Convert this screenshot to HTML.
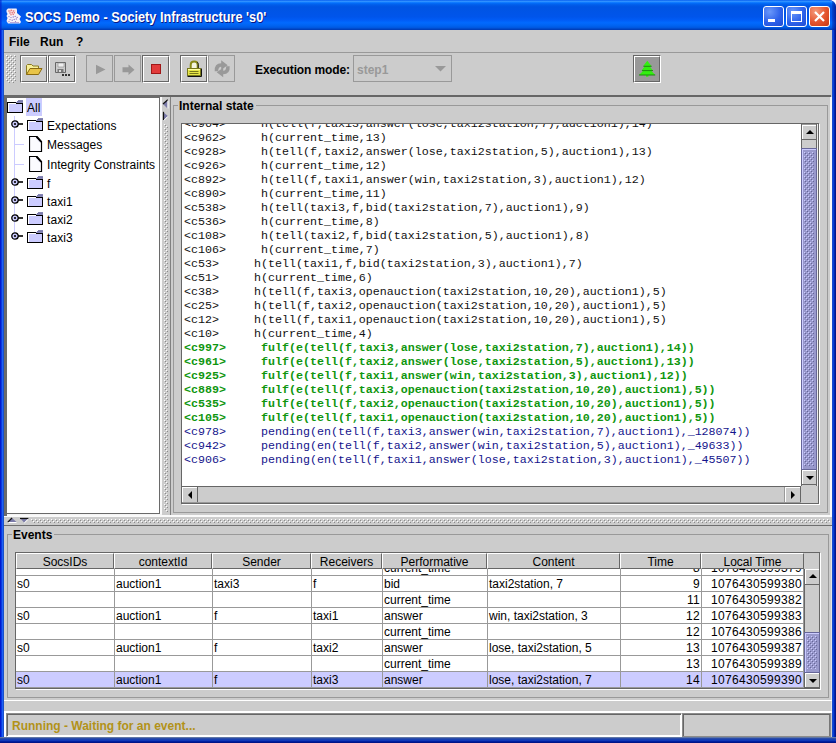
<!DOCTYPE html>
<html>
<head>
<meta charset="utf-8">
<title>SOCS Demo - Society Infrastructure 's0'</title>
<style>
*{box-sizing:border-box;margin:0;padding:0}
html,body{width:836px;height:743px;overflow:hidden;background:#fff}
body{font-family:"Liberation Sans",sans-serif;font-size:12px;color:#000;position:relative}
.abs{position:absolute}
#win{position:absolute;left:0;top:0;width:836px;height:743px;background:#0831d9;border-radius:0 7px 0 0;overflow:hidden}
#titlebar{position:absolute;left:0;top:0;width:836px;height:30px;border-radius:0 7px 0 0;
background:linear-gradient(to bottom,#0058ee 0%,#3593ff 4%,#288eff 6%,#127dff 8%,#036ffc 10%,#0262ee 14%,#0057e5 20%,#0054e3 24%,#0055eb 56%,#005bf5 66%,#026afe 76%,#0062ef 86%,#0058e0 92%,#0048c8 96%,#0038b0 100%)}
#title{position:absolute;left:25px;top:9px;font-weight:bold;font-size:14px;color:#fff;white-space:nowrap;text-shadow:1px 1px 0 #0a1883;transform:scaleX(.908);transform-origin:0 0}
.tb{position:absolute;top:6px;width:21px;height:21px;border:1px solid #fff;border-radius:3px;
background:radial-gradient(circle at 30% 25%,#6a98fa 0%,#2e62ea 55%,#1e4cd4 100%)}
#client{position:absolute;left:4px;top:30px;width:828px;height:707px;background:#ccc}
.mi{position:absolute;top:35px;font-weight:bold;font-size:12px}
.btn{position:absolute;top:55px;width:28px;height:28px;border:1px solid;border-color:#666 #fff #fff #666;background:#ccc}
.btn:after{content:"";position:absolute;left:0;top:0;right:0;bottom:0;border:1px solid;border-color:#fff #666 #666 #fff}
.btn.dis{border:1px solid #999;width:27px;height:27px}
.btn.dis:after{display:none}
.btn svg{position:absolute;left:0;top:0}
.lbl{position:absolute;font-weight:bold;font-size:12px;white-space:nowrap}
.tr{position:absolute;font-size:12px;white-space:nowrap;line-height:14px;letter-spacing:.07px}
pre.ta{position:absolute;left:2px;top:-7px;font-family:"Liberation Mono",monospace;font-size:11.667px;line-height:14px;white-space:pre;color:#111}
pre.ta .g{color:#0f960f;font-weight:bold}
pre.ta .b{color:#14148c}
.hd{position:absolute;top:0;height:16px;background:#ccc;border:1px solid;border-color:#fff #666 #666 #fff;text-align:center;font-size:12px;line-height:16px;white-space:nowrap;overflow:hidden}
.row{position:absolute;left:0;width:788px;height:16px;border-bottom:1px solid #999;background:#fff}
.row.sel{background:#ccccff}
.c{position:absolute;top:0;height:16px;border-right:1px solid #999;font-size:12px;line-height:17px;padding:0 2px 0 1px;white-space:nowrap;overflow:hidden}
.c.r{text-align:right;letter-spacing:.33px;padding-right:1px}
.sbtn{position:absolute;background:#ccc;border:1px solid;border-color:#fff #666 #666 #fff;outline:1px solid #999;outline-offset:0}
.thumb{position:absolute;background-color:#9999cc;border:1px solid #666699;
background-image:conic-gradient(#ccccff 25%,#9999cc 0 50%,#8080b8 0 75%,#9999cc 0);background-size:2px 2px}
.dots{position:absolute;background-image:conic-gradient(#fff 25%,#ccc 0 50%,#999 0 75%,#ccc 0);background-size:2px 2px}

.vs{position:absolute;width:16px;background:#ccc;border-left:1px solid #666;border-right:1px solid #666}
.vs .up{position:absolute;left:0;top:0;width:14px;height:16px;border-top:1px solid #999;border-bottom:1px solid #666;box-shadow:inset 1px 1px 0 #fff}
.vs .dn{position:absolute;left:0;bottom:1px;width:14px;height:15px;border-bottom:1px solid #666;box-shadow:inset 1px 1px 0 #fff}
.vs .th{position:absolute;left:-1px;width:16px;background:#9999cc;border:1px solid #666699;box-shadow:inset 1px 1px 0 #ccccff}
.vs svg{position:absolute}
.pane{position:absolute;border:1px solid #666;box-shadow:1px 1px 0 #fff;background:#ccc}
</style>
</head>
<body>
<div id="win">
<svg width="0" height="0" style="position:absolute"><defs>
<pattern id="bump" width="4" height="4" patternUnits="userSpaceOnUse"><rect x="0" y="0" width="1" height="1" fill="#fff"/><rect x="1" y="1" width="1" height="1" fill="#8a8a8a"/><rect x="2" y="2" width="1" height="1" fill="#fff"/><rect x="3" y="3" width="1" height="1" fill="#8a8a8a"/></pattern>
<pattern id="tbump" width="4" height="4" patternUnits="userSpaceOnUse"><rect x="0" y="0" width="1" height="1" fill="#ccccff"/><rect x="1" y="1" width="1" height="1" fill="#666699"/><rect x="2" y="2" width="1" height="1" fill="#ccccff"/><rect x="3" y="3" width="1" height="1" fill="#666699"/></pattern>
</defs></svg>
<div id="titlebar"></div>
<div class="abs" style="left:832px;top:0;width:4px;height:30px;background:linear-gradient(to right,rgba(0,40,170,.35),rgba(0,20,140,.8))"></div>
<div class="abs" style="left:0;top:0;width:2px;height:30px;background:linear-gradient(to right,rgba(0,25,200,.7),rgba(0,40,210,.3))"></div>
<div id="title">SOCS Demo - Society Infrastructure 's0'</div>
<!-- app icon -->
<svg class="abs" style="left:6px;top:8px" width="16" height="16" viewBox="0 0 16 16">
<path d="M.5 2L2 .5h8.500l.5 1.500V5l4 3.500L13.500 11l1.500 3-1 1.500H2L.5 13l1-3L.5 8l1-2L.5 4z" fill="#f7f0f7"/>
<g fill="#e04a4a" opacity=".85"><circle cx="3" cy="3" r=".8"/><circle cx="5.200" cy="2.300" r=".8"/><circle cx="7.300" cy="3" r=".8"/><circle cx="4" cy="5" r=".8"/><circle cx="6.200" cy="4.800" r=".8"/><circle cx="8.300" cy="4.800" r=".7"/><circle cx="5" cy="6.800" r=".7"/><circle cx="7.300" cy="6.600" r=".7"/></g>
<g fill="#f0a0a8" opacity=".7"><circle cx="4.500" cy="3.800" r="1"/><circle cx="6.800" cy="5.800" r="1"/><circle cx="8.800" cy="3" r=".8"/></g>
<g fill="#6a55b5" opacity=".75"><circle cx="3" cy="8.600" r=".7"/><circle cx="5" cy="9.600" r=".7"/><circle cx="7.200" cy="9" r=".7"/><circle cx="9.200" cy="8.400" r=".7"/><circle cx="11.200" cy="9.400" r=".7"/><circle cx="4" cy="11.600" r=".7"/><circle cx="6.200" cy="12.200" r=".7"/><circle cx="8.200" cy="11.400" r=".7"/><circle cx="10.300" cy="11" r=".7"/><circle cx="3" cy="13.600" r=".6"/><circle cx="9.500" cy="13.500" r=".6"/></g>
<path d="M4 14.500h9" stroke="#b8a8d8" stroke-width="1"/>
</svg>
<!-- window buttons -->
<div class="tb" style="left:763px"><div class="abs" style="left:4px;top:12px;width:7px;height:3px;background:#fff"></div></div>
<div class="tb" style="left:786px"><div class="abs" style="left:4px;top:4px;width:11px;height:11px;border:1px solid #fff;border-top-width:3px"></div></div>
<div class="tb" style="left:809px;background:radial-gradient(circle at 30% 25%,#f49a7c 0%,#e4542e 55%,#c63812 100%)">
<svg class="abs" style="left:0;top:0" width="19" height="19" viewBox="0 0 19 19"><path d="M5 5l9 9M14 5l-9 9" stroke="#fff" stroke-width="2.2"/></svg></div>
<div id="client"></div>
<!-- menu bar -->
<div class="mi" style="left:9px">File</div>
<div class="mi" style="left:40px">Run</div>
<div class="mi" style="left:76px">?</div>
<div class="abs" style="left:4px;top:52px;width:828px;height:1px;background:#999"></div>
<!-- toolbar -->
<svg class="abs" style="left:6px;top:55px" width="10" height="28"><rect width="10" height="28" fill="url(#bump)"/></svg>
<div class="btn" style="left:20px">
<svg width="26" height="26" viewBox="0 0 26 26"><path d="M5.500 18.500v-9l1-1h4l1.500 1.500h5.500v3" fill="#f8f098" stroke="#8a7a20" stroke-width="1"/><path d="M5.500 18.500l3.500-6h12l-3.500 6z" fill="#e8c448" stroke="#8a6a10" stroke-width="1"/></svg></div>
<div class="btn" style="left:48px">
<svg width="26" height="26" viewBox="0 0 26 26"><path d="M6.500 6.500h10v10h-10z" fill="#ccc" stroke="#666" stroke-width="1"/><path d="M9 7h6v4H9z" fill="#eee" stroke="#888" stroke-width=".6"/><path d="M8.500 13h6v3.500h-6z" fill="#777"/><path d="M10 14h2v2h-2z" fill="#ddd"/><path d="M13 18h2v2h-2zM16 18h2v2h-2zM19 18h2v2h-2z" fill="#333"/></svg></div>
<div class="btn dis" style="left:86px">
<svg width="26" height="26" viewBox="0 0 26 26"><path d="M9 8.800l9.500 4.700L9 18.200z" fill="#999"/></svg></div>
<div class="btn dis" style="left:114px">
<svg width="26" height="26" viewBox="0 0 26 26"><path d="M7.500 11.300h6V8.500l6 5.300-6 5.300v-2.800h-6z" fill="#999"/></svg></div>
<div class="btn" style="left:142px">
<svg width="26" height="26" viewBox="0 0 26 26"><rect x="8.500" y="8.500" width="9" height="9" fill="#e23b3b" stroke="#a01818" stroke-width="1"/></svg></div>
<div class="btn" style="left:180px">
<svg width="26" height="26" viewBox="0 0 26 26"><path d="M9.700 12.500V8.800q0-3.300 3.500-3.300t3.500 3.300V12.500" fill="#f4f4e0" stroke="#8a8a18" stroke-width="2"/><path d="M17.300 12.500V8.800q0-1.800-1-2.600" fill="none" stroke="#222" stroke-width="1"/><rect x="6.500" y="12.500" width="13" height="7" fill="#e6e648" stroke="#77771a" stroke-width="1"/><path d="M7 13.500h12" stroke="#ffffa0" stroke-width="1"/><path d="M20.500 12.500v8h-14" fill="none" stroke="#111" stroke-width="1"/><path d="M8.500 15.500h9M8.500 17.500h9" stroke="#77771a" stroke-width="1"/></svg></div>
<div class="btn dis" style="left:208px">
<svg width="26" height="26" viewBox="0 0 26 26"><g transform="translate(13.200 12.800)" fill="#999"><path d="M-7.500 2.500q-.5-8 6.500-8V-8.500l6.500 5-6.500 4.500V-2q-3 0-3 4.500z"/><path d="M7.500 -2.500q.5 8-6.500 8V8.500l-6.500-5 6.500-4.500V2q3 0 3-4.500z"/></g></svg></div>
<div class="lbl" style="left:255px;top:63px;letter-spacing:-0.12px">Execution mode:</div>
<div class="abs" style="left:353px;top:55px;width:99px;height:27px;border:1px solid #999"></div>
<div class="lbl" style="left:357px;top:63px;color:#999">step1</div>
<svg class="abs" style="left:435px;top:66px" width="11" height="6" viewBox="0 0 11 6"><path d="M0 0h11L5.500 5.500z" fill="#999"/></svg>
<div class="btn" style="left:633px;background:#999">
<svg width="26" height="26" viewBox="0 0 26 26"><path d="M13.300 4.800L17.600 10.300H15.600L19 14.600H17L21.200 19H14.400V20.700H12V19H5L9.500 14.600H7.500L11 10.300H9Z" fill="#33ee11"/><path d="M9.500 10.300H17.600M8 14.600H19M5 19H21.200" stroke="#1c8a10" stroke-width="1" fill="none"/></svg></div>
<!-- top dark line under toolbar -->
<div class="abs" style="left:4px;top:95px;width:827px;height:2px;background:#666"></div>
<div class="abs" style="left:830px;top:97px;width:2px;height:420px;background:#f8f8f8"></div>
<div class="abs" style="left:831px;top:526px;width:1px;height:185px;background:#e4e4e4"></div>
<!-- tree scroll pane -->
<div class="abs" style="left:4px;top:95px;width:156px;height:419px;background:#fff;border:solid #6a6a6a;border-width:3px 1px 1px 3px"></div>
<div class="abs" style="left:160px;top:97px;width:2px;height:418px;background:#fafafa"></div>
<div class="abs" style="left:4px;top:514px;width:158px;height:1px;background:#f0f0f0"></div>
<!-- tree content -->
<div class="abs" style="left:26px;top:98px;width:16px;height:18px;background:#ccccff"></div>
<div class="abs" style="left:14px;top:116px;width:1px;height:122px;background:#ccccff"></div>
<div class="abs" style="left:14px;top:144px;width:10px;height:1px;background:#ccccff"></div>
<div class="abs" style="left:14px;top:164px;width:10px;height:1px;background:#ccccff"></div>
<svg width="0" height="0" style="position:absolute"><defs>
<g id="fold" shape-rendering="crispEdges"><rect x="0" y="2" width="16" height="11" fill="#000"/><rect x="1" y="3" width="14" height="9" fill="#ccccff"/><rect x="1" y="3" width="8" height="1" fill="#fff"/><rect x="1" y="3" width="1" height="9" fill="#fff"/><rect x="9" y="2" width="7" height="1" fill="#8888b8"/><rect x="9" y="3" width="6" height="1" fill="#000"/><rect x="10" y="1" width="6" height="1" fill="#7a7aaa"/><rect x="11" y="0" width="5" height="1" fill="#8585b5"/></g>
<g id="doc"><path d="M.500 .500h7.500l4.500 5v10H.500z" fill="#fbfbff" stroke="#000" stroke-width="1.200"/><path d="M7.500 1l4.500 5" stroke="#000" stroke-width="1.800" fill="none"/><path d="M7.200 2.300l3.600 4" stroke="#d8d8f0" stroke-width=".8" fill="none"/></g>
<g id="hdl"><circle cx="4" cy="4" r="3.200" fill="#ccccff" stroke="#000" stroke-width="1.300"/><circle cx="4" cy="4" r="1.100" fill="#000"/><path d="M7 4h5" stroke="#000" stroke-width="1.600"/></g>
</defs></svg>
<svg class="abs" style="left:7px;top:100px" width="17" height="14"><use href="#fold"/></svg>
<div class="tr" style="left:27px;top:101px">All</div>
<svg class="abs" style="left:11px;top:120px" width="13" height="9"><use href="#hdl"/></svg>
<svg class="abs" style="left:27px;top:118px" width="17" height="14"><use href="#fold"/></svg>
<div class="tr" style="left:47px;top:119px">Expectations</div>
<svg class="abs" style="left:29px;top:136px" width="14" height="17"><use href="#doc"/></svg>
<div class="tr" style="left:47px;top:138px">Messages</div>
<svg class="abs" style="left:29px;top:156px" width="14" height="17"><use href="#doc"/></svg>
<div class="tr" style="left:47px;top:158px">Integrity Constraints</div>
<svg class="abs" style="left:11px;top:178px" width="13" height="9"><use href="#hdl"/></svg>
<svg class="abs" style="left:27px;top:176px" width="17" height="14"><use href="#fold"/></svg>
<div class="tr" style="left:47px;top:177px">f</div>
<svg class="abs" style="left:11px;top:196px" width="13" height="9"><use href="#hdl"/></svg>
<svg class="abs" style="left:27px;top:194px" width="17" height="14"><use href="#fold"/></svg>
<div class="tr" style="left:47px;top:195px">taxi1</div>
<svg class="abs" style="left:11px;top:214px" width="13" height="9"><use href="#hdl"/></svg>
<svg class="abs" style="left:27px;top:212px" width="17" height="14"><use href="#fold"/></svg>
<div class="tr" style="left:47px;top:213px">taxi2</div>
<svg class="abs" style="left:11px;top:232px" width="13" height="9"><use href="#hdl"/></svg>
<svg class="abs" style="left:27px;top:230px" width="17" height="14"><use href="#fold"/></svg>
<div class="tr" style="left:47px;top:231px">taxi3</div>
<!-- vertical divider -->
<div class="abs" style="left:162px;top:97px;width:8px;height:419px;background:#ccc"></div>
<div class="abs" style="left:170px;top:97px;width:1px;height:419px;background:#808080"></div>
<svg class="abs" style="left:162px;top:99px" width="8" height="23" viewBox="0 0 8 23"><path d="M5.500 1v8.500L1 5z" fill="#7a7aa8"/><path d="M5.800 .8L1 5" stroke="#111" stroke-width="1.200" fill="none"/><path d="M6 1.500v8" stroke="#fff" stroke-width="1"/><path d="M1 13v8.500L5.800 17z" fill="#7a7aa8"/><path d="M1.500 12.800v8.500" stroke="#111" stroke-width="1.200" fill="none"/><path d="M5.800 17.500L1.500 21.800" stroke="#fff" stroke-width="1"/></svg>
<svg class="abs" style="left:164px;top:124px" width="4" height="388"><rect width="4" height="388" fill="url(#bump)"/></svg>
<!-- Internal state titled border -->
<div class="abs" style="left:173px;top:105px;width:655px;height:408px;border:1px solid #999"></div>
<div class="lbl" style="left:178px;top:99px;background:#ccc;padding:0 2px 0 1px;line-height:14px">Internal state</div>
<!-- text scroll pane -->
<div class="pane" style="left:181px;top:123px;width:638px;height:381px"></div>
<div class="abs" id="ta" style="left:182px;top:124px;width:619px;height:362px;background:#fff;overflow:hidden">
<pre class="ta">&lt;c964&gt;     h(tell(f,taxi3,answer(lose,taxi2station,7),auction1),14)
&lt;c962&gt;     h(current_time,13)
&lt;c928&gt;     h(tell(f,taxi2,answer(lose,taxi2station,5),auction1),13)
&lt;c926&gt;     h(current_time,12)
&lt;c892&gt;     h(tell(f,taxi1,answer(win,taxi2station,3),auction1),12)
&lt;c890&gt;     h(current_time,11)
&lt;c538&gt;     h(tell(taxi3,f,bid(taxi2station,7),auction1),9)
&lt;c536&gt;     h(current_time,8)
&lt;c108&gt;     h(tell(taxi2,f,bid(taxi2station,5),auction1),8)
&lt;c106&gt;     h(current_time,7)
&lt;c53&gt;     h(tell(taxi1,f,bid(taxi2station,3),auction1),7)
&lt;c51&gt;     h(current_time,6)
&lt;c38&gt;     h(tell(f,taxi3,openauction(taxi2station,10,20),auction1),5)
&lt;c25&gt;     h(tell(f,taxi2,openauction(taxi2station,10,20),auction1),5)
&lt;c12&gt;     h(tell(f,taxi1,openauction(taxi2station,10,20),auction1),5)
&lt;c10&gt;     h(current_time,4)
<span class="g">&lt;c997&gt;     fulf(e(tell(f,taxi3,answer(lose,taxi2station,7),auction1),14))
&lt;c961&gt;     fulf(e(tell(f,taxi2,answer(lose,taxi2station,5),auction1),13))
&lt;c925&gt;     fulf(e(tell(f,taxi1,answer(win,taxi2station,3),auction1),12))
&lt;c889&gt;     fulf(e(tell(f,taxi3,openauction(taxi2station,10,20),auction1),5))
&lt;c535&gt;     fulf(e(tell(f,taxi2,openauction(taxi2station,10,20),auction1),5))
&lt;c105&gt;     fulf(e(tell(f,taxi1,openauction(taxi2station,10,20),auction1),5))</span>
<span class="b">&lt;c978&gt;     pending(en(tell(f,taxi3,answer(win,taxi2station,7),auction1),_128074))
&lt;c942&gt;     pending(en(tell(f,taxi2,answer(win,taxi2station,5),auction1),_49633))
&lt;c906&gt;     pending(en(tell(f,taxi1,answer(lose,taxi2station,3),auction1),_45507))</span></pre>
</div>
<!-- vertical scrollbar -->
<div class="vs" style="left:801px;top:124px;height:362px">
<div class="up"></div><svg style="left:4px;top:6px" width="8" height="4"><path d="M0 4h8L4 0z" fill="#000"/></svg>
<div class="th" style="top:24px;height:322px"><svg style="left:2px;top:3px" width="10" height="314"><rect width="10" height="314" fill="url(#tbump)"/></svg></div>
<div class="dn"></div><svg style="left:4px;top:352px" width="8" height="4"><path d="M0 0h8L4 4z" fill="#000"/></svg>
</div>
<div class="abs" style="left:817px;top:124px;width:1px;height:362px;background:#eee"></div>
<!-- horizontal scrollbar -->
<div class="abs" style="left:182px;top:486px;width:619px;height:17px;background:#ccc;border-top:1px solid #666;border-bottom:1px solid #999"></div>
<div class="abs" style="left:182px;top:487px;width:16px;height:15px;border-right:1px solid #666;box-shadow:inset 1px 1px 0 #fff"></div>
<svg class="abs" style="left:188px;top:491px" width="4" height="8"><path d="M4 0v8L0 4z" fill="#000"/></svg>
<div class="abs" style="left:784px;top:487px;width:17px;height:15px;border-left:1px solid #999;border-right:1px solid #666;box-shadow:inset 1px 1px 0 #fff"></div>
<svg class="abs" style="left:791px;top:491px" width="4" height="8"><path d="M0 0v8L4 4z" fill="#000"/></svg>
<!-- horizontal divider -->
<div class="abs" style="left:4px;top:514px;width:158px;height:2px;background:#f4f4f4"></div>
<div class="abs" style="left:4px;top:515px;width:828px;height:2px;background:#fafafa"></div>
<div class="abs" style="left:4px;top:517px;width:828px;height:8px;background:#ccc"></div>
<div class="abs" style="left:4px;top:514px;width:3px;height:2px;background:#6a6a6a"></div>
<svg class="abs" style="left:7px;top:517px" width="23" height="7" viewBox="0 0 23 7"><path d="M1 5h8.500L5 1z" fill="#7a7aa8"/><path d="M.8 5.200L5 1" stroke="#111" stroke-width="1.200" fill="none"/><path d="M1.500 5.500h8" stroke="#fff" stroke-width="1"/><path d="M13 1h8.500L17 5.500z" fill="#7a7aa8"/><path d="M13 1.500h8.500" stroke="#111" stroke-width="1.200" fill="none"/><path d="M21.500 2L17.300 6" stroke="#fff" stroke-width="1"/></svg>
<svg class="abs" style="left:31px;top:519px" width="799" height="4"><rect width="799" height="4" fill="url(#bump)"/></svg>
<div class="abs" style="left:4px;top:525px;width:828px;height:1px;background:#6e6e6e"></div>
<!-- Events titled border -->
<div class="abs" style="left:7px;top:534px;width:822px;height:164px;border:1px solid #999"></div>
<div class="lbl" style="left:12px;top:528px;background:#ccc;padding:0 2px 0 1px;line-height:14px">Events</div>
<!-- table scroll pane -->
<div class="pane" style="left:15px;top:552px;width:805px;height:137px"></div>
<div class="abs" style="left:16px;top:553px;width:803px;height:16px;background:#ccc">
<div class="hd" style="left:0px;width:98px">SocsIDs</div>
<div class="hd" style="left:98px;width:98px">contextId</div>
<div class="hd" style="left:196px;width:99px">Sender</div>
<div class="hd" style="left:295px;width:71px">Receivers</div>
<div class="hd" style="left:366px;width:105px">Performative</div>
<div class="hd" style="left:471px;width:133px">Content</div>
<div class="hd" style="left:604px;width:81px">Time</div>
<div class="hd" style="left:685px;width:103px">Local Time</div>
</div>
<div class="abs" style="left:16px;top:569px;width:788px;height:119px;background:#fff;overflow:hidden">
<div class="row" style="top:-9px">
<div class="c" style="left:0px;width:99px"></div>
<div class="c" style="left:99px;width:98px"></div>
<div class="c" style="left:197px;width:99px"></div>
<div class="c" style="left:296px;width:71px"></div>
<div class="c" style="left:367px;width:105px">current_time</div>
<div class="c" style="left:472px;width:133px"></div>
<div class="c r" style="left:605px;width:81px">8</div>
<div class="c r" style="left:686px;width:102px">1076430599379</div>
</div>
<div class="row" style="top:7px">
<div class="c" style="left:0px;width:99px">s0</div>
<div class="c" style="left:99px;width:98px">auction1</div>
<div class="c" style="left:197px;width:99px">taxi3</div>
<div class="c" style="left:296px;width:71px">f</div>
<div class="c" style="left:367px;width:105px">bid</div>
<div class="c" style="left:472px;width:133px">taxi2station, 7</div>
<div class="c r" style="left:605px;width:81px">9</div>
<div class="c r" style="left:686px;width:102px">1076430599380</div>
</div>
<div class="row" style="top:23px">
<div class="c" style="left:0px;width:99px"></div>
<div class="c" style="left:99px;width:98px"></div>
<div class="c" style="left:197px;width:99px"></div>
<div class="c" style="left:296px;width:71px"></div>
<div class="c" style="left:367px;width:105px">current_time</div>
<div class="c" style="left:472px;width:133px"></div>
<div class="c r" style="left:605px;width:81px">11</div>
<div class="c r" style="left:686px;width:102px">1076430599382</div>
</div>
<div class="row" style="top:39px">
<div class="c" style="left:0px;width:99px">s0</div>
<div class="c" style="left:99px;width:98px">auction1</div>
<div class="c" style="left:197px;width:99px">f</div>
<div class="c" style="left:296px;width:71px">taxi1</div>
<div class="c" style="left:367px;width:105px">answer</div>
<div class="c" style="left:472px;width:133px">win, taxi2station, 3</div>
<div class="c r" style="left:605px;width:81px">12</div>
<div class="c r" style="left:686px;width:102px">1076430599383</div>
</div>
<div class="row" style="top:55px">
<div class="c" style="left:0px;width:99px"></div>
<div class="c" style="left:99px;width:98px"></div>
<div class="c" style="left:197px;width:99px"></div>
<div class="c" style="left:296px;width:71px"></div>
<div class="c" style="left:367px;width:105px">current_time</div>
<div class="c" style="left:472px;width:133px"></div>
<div class="c r" style="left:605px;width:81px">12</div>
<div class="c r" style="left:686px;width:102px">1076430599386</div>
</div>
<div class="row" style="top:71px">
<div class="c" style="left:0px;width:99px">s0</div>
<div class="c" style="left:99px;width:98px">auction1</div>
<div class="c" style="left:197px;width:99px">f</div>
<div class="c" style="left:296px;width:71px">taxi2</div>
<div class="c" style="left:367px;width:105px">answer</div>
<div class="c" style="left:472px;width:133px">lose, taxi2station, 5</div>
<div class="c r" style="left:605px;width:81px">13</div>
<div class="c r" style="left:686px;width:102px">1076430599387</div>
</div>
<div class="row" style="top:87px">
<div class="c" style="left:0px;width:99px"></div>
<div class="c" style="left:99px;width:98px"></div>
<div class="c" style="left:197px;width:99px"></div>
<div class="c" style="left:296px;width:71px"></div>
<div class="c" style="left:367px;width:105px">current_time</div>
<div class="c" style="left:472px;width:133px"></div>
<div class="c r" style="left:605px;width:81px">13</div>
<div class="c r" style="left:686px;width:102px">1076430599389</div>
</div>
<div class="row sel" style="top:103px">
<div class="c" style="left:0px;width:99px">s0</div>
<div class="c" style="left:99px;width:98px">auction1</div>
<div class="c" style="left:197px;width:99px">f</div>
<div class="c" style="left:296px;width:71px">taxi3</div>
<div class="c" style="left:367px;width:105px">answer</div>
<div class="c" style="left:472px;width:133px">lose, taxi2station, 7</div>
<div class="c r" style="left:605px;width:81px">14</div>
<div class="c r" style="left:686px;width:102px">1076430599390</div>
</div>
</div>
<div class="vs" style="left:804px;top:569px;height:119px;width:15px;border-right:0">
<div class="up" style="border-top:0;box-shadow:inset 1px 1px 0 #fff"></div><svg style="left:4px;top:5px" width="8" height="4"><path d="M0 4h8L4 0z" fill="#000"/></svg>
<div class="th" style="top:63px;height:41px"><svg style="left:2px;top:3px" width="10" height="33"><rect width="10" height="33" fill="url(#tbump)"/></svg></div>
<div class="dn" style="bottom:0"></div><svg style="left:4px;top:110px" width="8" height="4"><path d="M0 0h8L4 4z" fill="#000"/></svg>
</div>
<!-- status -->
<div class="abs" style="left:4px;top:700px;width:828px;height:1px;background:#fff"></div>
<div class="abs" style="left:4px;top:711px;width:828px;height:2px;background:#fff"></div>
<div class="abs" style="left:4px;top:711px;width:2px;height:26px;background:#fff"></div>
<div class="abs" style="left:6px;top:713px;width:676px;height:24px;border:1px solid;border-color:#8c8c8c #fff #fff #8c8c8c;box-shadow:inset 1px 1px 0 #666,inset -1px -1px 0 #fff"></div>
<div class="abs" style="left:682px;top:713px;width:149px;height:24px;border:1px solid #8c8c8c;box-shadow:inset 1px 1px 0 #666,inset -1px 0 0 #777"></div>
<div class="lbl" style="left:12px;top:719px;color:#b29218">Running - Waiting for an event...</div>
<!-- frame borders -->
<div class="abs" style="left:0;top:30px;width:4px;height:713px;background:linear-gradient(to right,#0019cf 0,#0019cf 25%,#0a3adf 25%,#0a3adf 50%,#1e60f5 50%,#1e60f5 75%,#1a50c8 75%)"></div>
<div class="abs" style="left:832px;top:30px;width:4px;height:713px;background:linear-gradient(to right,#1848cc 0,#1848cc 25%,#0540d8 25%,#0540d8 50%,#0326ae 50%,#0326ae 75%,#00168c 75%)"></div>
<div class="abs" style="left:0;top:737px;width:836px;height:6px;background:linear-gradient(to bottom,#6078a8 0,#6078a8 16.600%,#2c4ca8 16.600%,#2c4ca8 33.300%,#1840b0 33.300%,#1840b0 50%,#1038b8 50%,#1038b8 66.600%,#0020a0 66.600%,#0020a0 83.300%,#001488 83.300%)"></div>
</div>
</body>
</html>
